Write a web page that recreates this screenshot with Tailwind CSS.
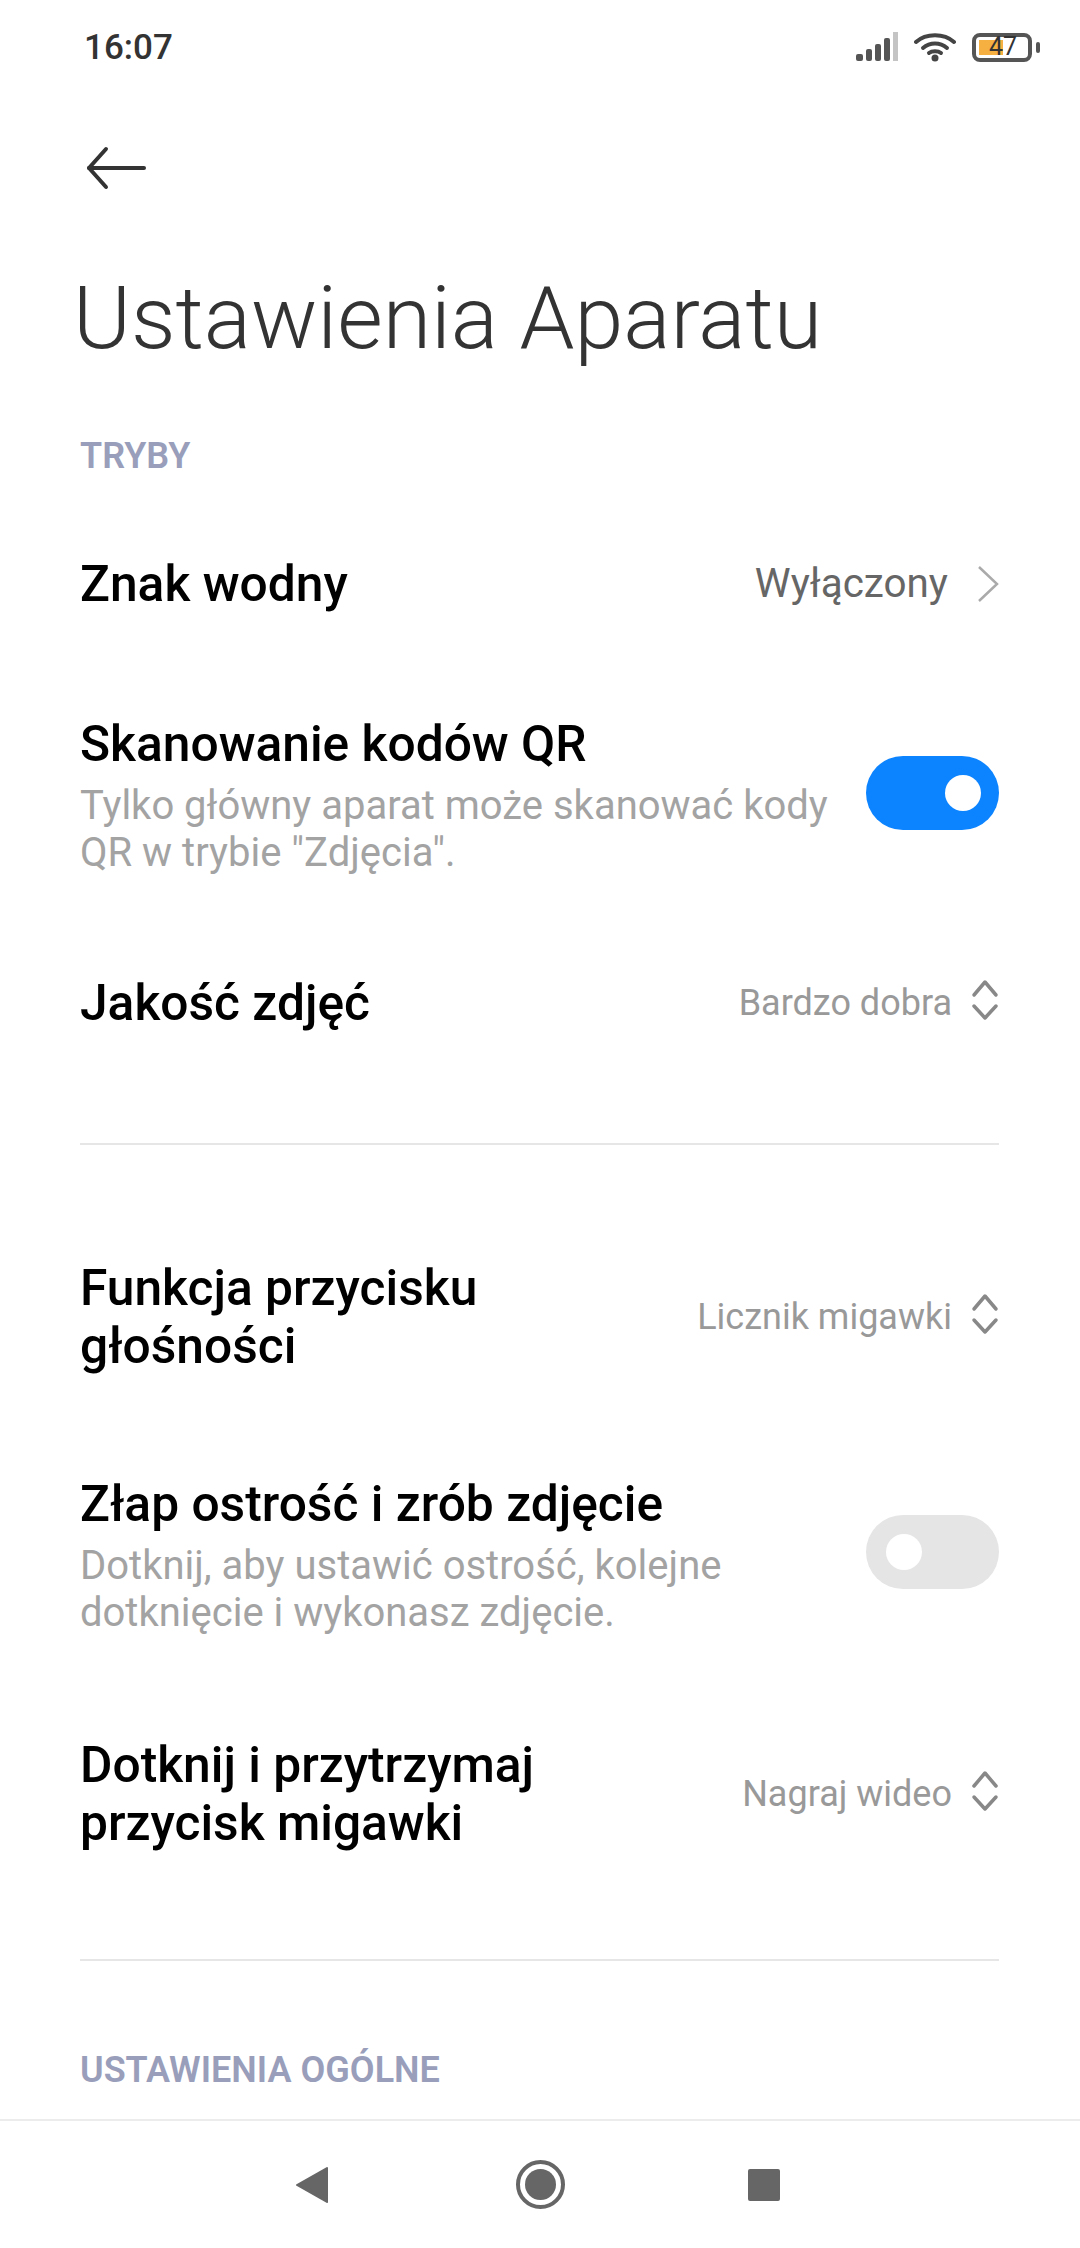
<!DOCTYPE html>
<html lang="pl">

<head>
  <meta charset="UTF-8">
  <meta name="viewport" content="width=device-width, initial-scale=1.0">
  <title>Ustawienia Aparatu</title>
  <script src="https://cdn.jsdelivr.net/npm/@tailwindcss/browser@4"></script>
</head>

<body class="bg-white font-['Roboto',sans-serif]">
  <div class="flex flex-col w-[1080px] h-[2248px] overflow-hidden">
    <!-- Status bar -->
    <div class="flex justify-between items-center h-[94px] shrink-0 pl-[84px] pr-[40px]">
      <span class="text-[35px] font-medium text-[#333] pt-[3px]">16:07</span>
      <div class="flex items-center">
        <svg class="w-[42px] h-[30px]" viewBox="0 0 42 30">
          <rect x="0" y="22" width="7" height="7" rx="2" fill="#555" />
          <rect x="10" y="17" width="6" height="12" rx="2" fill="#555" />
          <rect x="19" y="12" width="6" height="17" rx="2" fill="#555" />
          <rect x="28" y="6" width="6" height="23" rx="2" fill="#555" />
          <rect x="37" y="0" width="5" height="29" fill="#c4c4c4" />
        </svg>
        <svg class="w-[42px] h-[30px] ml-[16px]" viewBox="0 0 42 30" fill="none" stroke="#444" stroke-width="4" stroke-linecap="round">
          <path d="M2 10C12 1 30 1 40 10" />
          <path d="M9 16C16 10 26 10 33 16" />
          <circle cx="21" cy="26" r="3.5" fill="#444" stroke="none" />
          <path d="M15 21C18 18.500 24 18.500 27 21" />
        </svg>
        <div class="flex items-center ml-[16px]">
          <div class="relative w-[60px] h-[29px] border-[4px] border-[#555] rounded-[8px]">
            <div class="absolute left-[3px] top-[3px] w-[24px] h-[15px] bg-[#f5b041]"></div>
            <span class="absolute left-[13px] top-0 h-[21px] flex items-center text-[25px] text-[#333]">47</span>
          </div>
          <div class="w-[4px] h-[11px] ml-[4px] bg-[#555] rounded-full"></div>
        </div>
      </div>
    </div>

    <!-- Back arrow -->
    <div class="flex items-center h-[148px] shrink-0 pl-[86px]">
      <svg class="w-[60px] h-[44px]" viewBox="0 0 60 44" fill="none" stroke="#333" stroke-width="4" stroke-linecap="round" stroke-linejoin="round">
        <path d="M58 22H3" />
        <path d="M20 3L3 22L20 41" />
      </svg>
    </div>

    <!-- Title -->
    <div class="flex items-center h-[152px] shrink-0 pl-[73px]">
      <h1 class="text-[88px] font-light text-[#333] whitespace-nowrap">Ustawienia Aparatu</h1>
    </div>

    <!-- Main content -->
    <main class="flex-1 px-[80px] pr-[81px]">
      <div class="flex items-center h-[122px] pt-[2px] text-[36px] font-semibold text-[#999eba]">TRYBY</div>

      <div class="flex justify-between items-center h-[136px]">
        <span class="text-[49.700px] font-medium text-black">Znak wodny</span>
        <div class="flex items-center">
          <span class="text-[40.400px] text-[#666]">Wyłączony</span>
          <svg class="w-[22px] h-[38px] ml-[29px]" viewBox="0 0 22 38" fill="none" stroke="#aaa" stroke-width="2.500">
            <path d="M2 2L20 19L2 36" />
          </svg>
        </div>
      </div>

      <div class="flex justify-between items-center h-[281px]">
        <div class="mt-[5px]">
          <div class="text-[49.700px] leading-[58px] font-medium text-black">Skanowanie kodów QR</div>
          <div class="text-[40px] leading-[47px] text-[#a3a3a3] mt-[9px] w-[760px]">Tylko główny aparat może skanować kody QR w trybie "Zdjęcia".</div>
        </div>
        <div class="flex justify-end items-center w-[133px] h-[74px] pr-[18px] bg-[#0d84ff] rounded-full shrink-0">
          <div class="w-[36px] h-[36px] bg-white rounded-full"></div>
        </div>
      </div>

      <div class="flex justify-between items-center h-[140px]">
        <span class="text-[49.700px] font-medium text-black">Jakość zdjęć</span>
        <div class="flex items-center">
          <span class="text-[36px] text-[#999]">Bardzo dobra</span>
          <svg class="w-[28px] h-[44px] ml-[19px] mb-[6px]" viewBox="0 0 28 44" fill="none" stroke="#888" stroke-width="3.500" stroke-linecap="round" stroke-linejoin="round">
            <path d="M3 17L14 4L25 17" />
            <path d="M3 28L14 40L25 28" />
          </svg>
        </div>
      </div>

      <div class="h-[2px] mt-[70px] bg-[#e6e6e6]"></div>

      <div class="flex justify-between items-center h-[140px] mt-[102px]">
        <span class="text-[49.700px] leading-[58px] font-medium text-black w-[490px]">Funkcja przycisku głośności</span>
        <div class="flex items-center">
          <span class="text-[36px] text-[#999]">Licznik migawki</span>
          <svg class="w-[28px] h-[44px] ml-[19px] mb-[6px]" viewBox="0 0 28 44" fill="none" stroke="#888" stroke-width="3.500" stroke-linecap="round" stroke-linejoin="round">
            <path d="M3 17L14 4L25 17" />
            <path d="M3 28L14 40L25 28" />
          </svg>
        </div>
      </div>

      <div class="flex justify-between items-center h-[337px]">
        <div>
          <div class="text-[49.700px] leading-[58px] font-medium text-black">Złap ostrość i zrób zdjęcie</div>
          <div class="text-[40px] leading-[47px] text-[#a3a3a3] mt-[9px] w-[720px]">Dotknij, aby ustawić ostrość, kolejne dotknięcie i wykonasz zdjęcie.</div>
        </div>
        <div class="flex items-center w-[133px] h-[74px] pl-[20px] mb-[8px] bg-[#e5e5e5] rounded-full shrink-0">
          <div class="w-[36px] h-[36px] bg-white rounded-full"></div>
        </div>
      </div>

      <div class="flex justify-between items-center h-[140px]">
        <span class="text-[49.700px] leading-[58px] font-medium text-black w-[490px]">Dotknij i przytrzymaj przycisk migawki</span>
        <div class="flex items-center">
          <span class="text-[36px] text-[#999]">Nagraj wideo</span>
          <svg class="w-[28px] h-[44px] ml-[19px] mb-[6px]" viewBox="0 0 28 44" fill="none" stroke="#888" stroke-width="3.500" stroke-linecap="round" stroke-linejoin="round">
            <path d="M3 17L14 4L25 17" />
            <path d="M3 28L14 40L25 28" />
          </svg>
        </div>
      </div>

      <div class="h-[2px] mt-[95px] bg-[#e6e6e6]"></div>

      <div class="flex items-center h-[60px] mt-[79px] text-[36px] font-semibold text-[#999eba]">USTAWIENIA OGÓLNE</div>
    </main>

    <!-- Navigation bar -->
    <nav class="flex items-center h-[129px] shrink-0 pl-[295px] border-t-2 border-[#ececec]">
      <svg class="w-[34px] h-[38px]" viewBox="0 0 34 38">
        <path d="M32 2L2 19L32 36Z" fill="#666" stroke="#666" stroke-width="2" stroke-linejoin="round" />
      </svg>
      <div class="flex justify-center items-center w-[49px] h-[49px] ml-[187px] border-[4px] border-[#666] rounded-full">
        <div class="w-[31px] h-[31px] bg-[#666] rounded-full"></div>
      </div>
      <div class="w-[32px] h-[32px] ml-[183px] bg-[#666] rounded-[2px]"></div>
    </nav>
  </div>
</body>

</html>
